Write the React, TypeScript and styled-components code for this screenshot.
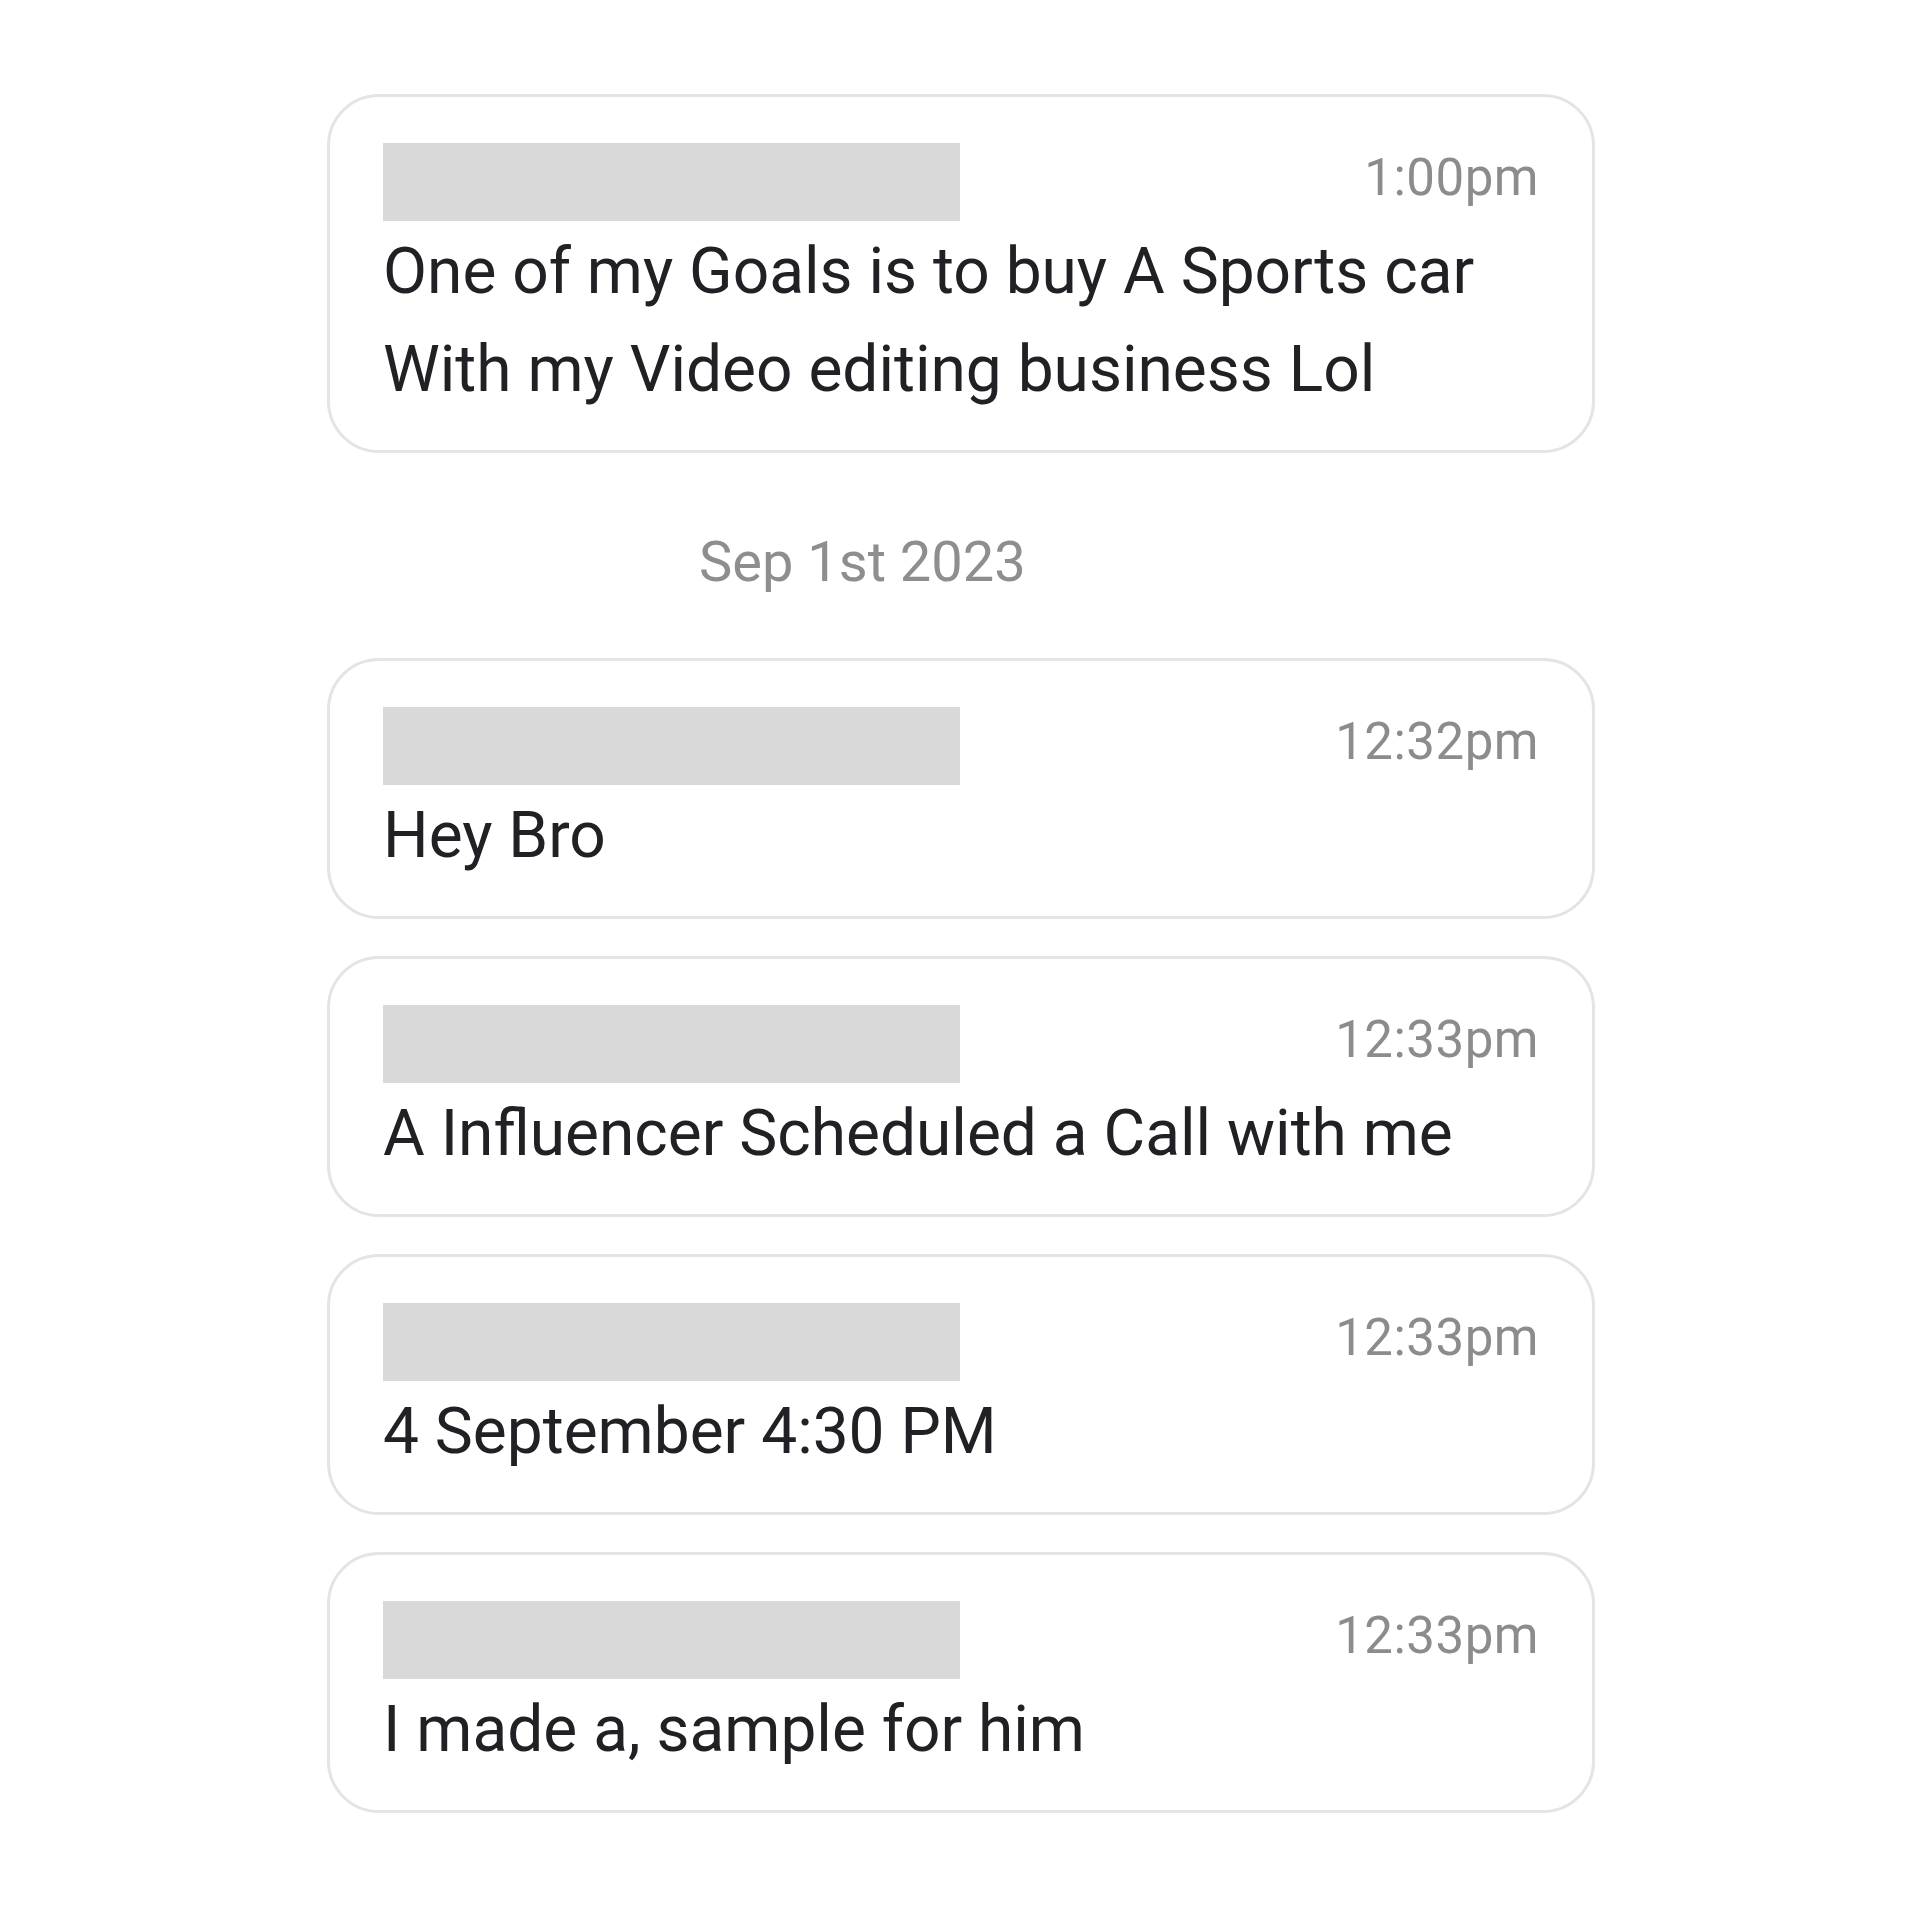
import React from "react";
import styled, { createGlobalStyle } from "styled-components";

const GlobalStyle = createGlobalStyle`
  html, body {
    margin: 0;
    padding: 0;
    background: #ffffff;
  }
  body {
    font-family: "Roboto", "Liberation Sans", sans-serif;
    -webkit-font-smoothing: antialiased;
  }
`;

const Page = styled.div`
  width: 1920px;
  min-height: 1920px;
  background: #ffffff;
  padding: 94px 0 0 327px;
  box-sizing: border-box;
`;

const Column = styled.div`
  width: 1268px;
  display: flex;
  flex-direction: column;
`;

const Card = styled.div<{ $gap?: number }>`
  box-sizing: border-box;
  width: 100%;
  border: 3px solid #e4e4e4;
  border-radius: 52px;
  padding: 46px 53px 31px 53px;
  margin-top: ${(p) => p.$gap ?? 0}px;
  display: flex;
  flex-direction: column;
  background: #ffffff;
`;

const Header = styled.div`
  display: flex;
  justify-content: space-between;
  align-items: flex-start;
`;

const NameBar = styled.div`
  width: 577px;
  height: 78px;
  background: #d9d9d9;
`;

const Time = styled.div`
  font-size: 51px;
  line-height: 60px;
  color: #8c8c8c;
  margin-top: 5px;
  letter-spacing: 0.5px;
`;

const Body = styled.div`
  margin-top: 2px;
  font-size: 64px;
  line-height: 98px;
  color: #202124;
`;

const DateLabel = styled.div`
  margin: 74px 0 61px 372px;
  font-size: 56px;
  line-height: 70px;
  color: #8e8e8e;
`;

type Msg = { time: string; lines: string[] };

const Message: React.FC<{ msg: Msg; gap?: number }> = ({ msg, gap }) => (
  <Card $gap={gap}>
    <Header>
      <NameBar />
      <Time>{msg.time}</Time>
    </Header>
    <Body>
      {msg.lines.map((l, i) => (
        <div key={i}>{l}</div>
      ))}
    </Body>
  </Card>
);

const later: Msg[] = [
  { time: "12:32pm", lines: ["Hey Bro"] },
  { time: "12:33pm", lines: ["A Influencer Scheduled a Call with me"] },
  { time: "12:33pm", lines: ["4 September 4:30 PM"] },
  { time: "12:33pm", lines: ["I made a, sample for him"] },
];

export default function App() {
  return (
    <>
      <GlobalStyle />
      <Page>
        <Column>
          <Message
            msg={{
              time: "1:00pm",
              lines: [
                "One of my Goals is to buy A Sports car",
                "With my Video editing business Lol",
              ],
            }}
          />
          <DateLabel>Sep 1st 2023</DateLabel>
          {later.map((m, i) => (
            <Message key={i} msg={m} gap={i === 0 ? 0 : 37} />
          ))}
        </Column>
      </Page>
    </>
  );
}
